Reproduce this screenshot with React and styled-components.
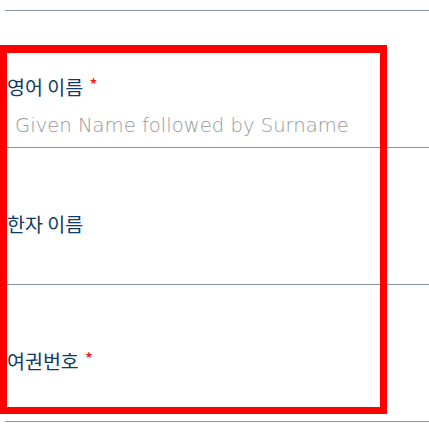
import React from "react";
import styled, { createGlobalStyle } from "styled-components";

const GlobalStyle = createGlobalStyle`
  html, body {
    margin: 0;
    padding: 0;
    background: #ffffff;
  }
  body {
    font-family: "Noto Sans CJK KR", "Noto Sans", sans-serif;
  }
`;

const Page = styled.div`
  position: relative;
  width: 429px;
  height: 433px;
  overflow: hidden;
  padding-top: 10px;
  box-sizing: border-box;
`;

const Form = styled.div`
  margin-left: 5px;
  border-top: 1px solid #8797a7;
`;

const Row = styled.div`
  display: flex;
  flex-direction: column;
  height: 136px;
  border-bottom: 1px solid #8797a7;
`;

const Label = styled.label`
  display: block;
  margin-top: 64px;
  padding-left: 2px;
  height: 24px;
  line-height: 24px;
  font-size: 19.5px;
  color: #0f3a63;
  white-space: nowrap;
`;

const Required = styled.span`
  color: #f5101a;
  font-size: 18px;
  font-weight: 400;
  margin-left: 6px;
  vertical-align: top;
  position: relative;
  top: -3px;
`;

const Input = styled.input`
  margin-top: 11px;
  height: 30px;
  width: 380px;
  border: none;
  outline: none;
  background: transparent;
  padding: 0 0 0 10px;
  font-family: "DejaVu Sans", sans-serif;
  font-weight: 200;
  font-size: 19.6px;
  color: #333;
  &::placeholder {
    color: #979797;
  }
`;

const Highlight = styled.div`
  position: absolute;
  left: 0;
  top: 45px;
  width: 387px;
  height: 369px;
  box-sizing: border-box;
  border: 7px solid #ff0000;
  border-top-width: 8px;
  pointer-events: none;
`;

const fields = [
  { label: "영어 이름", required: true, placeholder: "Given Name followed by Surname" },
  { label: "한자 이름", required: false, placeholder: "" },
  { label: "여권번호", required: true, placeholder: "" },
];

export default function App() {
  return (
    <>
      <GlobalStyle />
      <Page>
        <Form>
          {fields.map((f) => (
            <Row key={f.label}>
              <Label>
                {f.label}
                {f.required && <Required>*</Required>}
              </Label>
              <Input placeholder={f.placeholder} />
            </Row>
          ))}
        </Form>
        <Highlight />
      </Page>
    </>
  );
}
